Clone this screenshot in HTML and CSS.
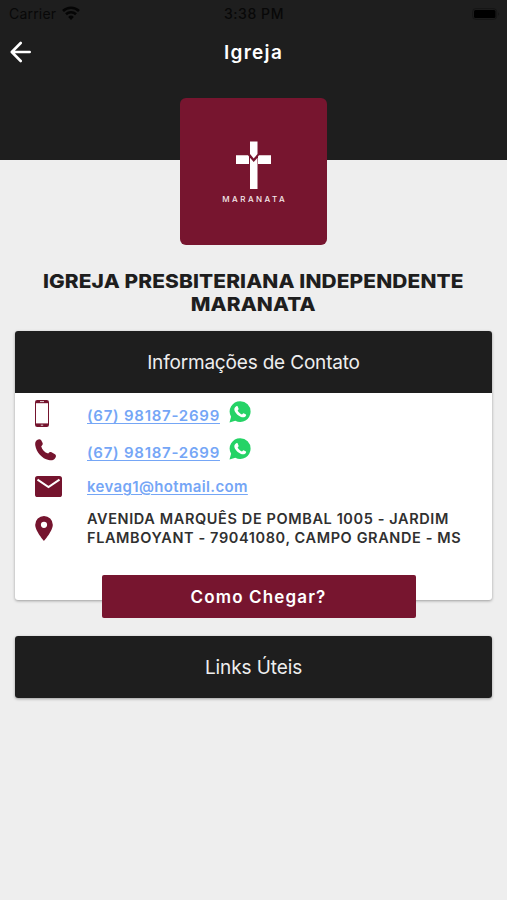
FILE: index.html
```html
<!DOCTYPE html>
<html lang="pt-BR">
<head>
<meta charset="utf-8">
<meta name="viewport" content="width=device-width, initial-scale=1">
<title>Igreja</title>
<link rel="stylesheet" href="styles.css">
</head>
<body>
<svg width="0" height="0" class="defs" aria-hidden="true">
  <symbol id="whatsapp" viewBox="0 0 22 22">
    <path fill="#25d366" d="M11.3 0.2A10.3 10.3 0 0 1 21.6 10.6 10.4 10.4 0 0 1 6.3 19.8L0.5 21.4 2.1 15.8A10.4 10.4 0 0 1 11.3 0.2Z"/>
    <path fill="#fff" d="M7.3 5.2C7.8 4.9 8.4 4.9 8.7 5.5L9.6 7.7C9.8 8.5 8.9 9 8.6 9.6 9.6 11.5 10.9 12.7 12.9 13.5 13.6 13.1 14 12 14.6 12.2L17 13.4C17.5 13.9 16.9 15.1 16.1 15.7 14 17 11.4 15.9 9.1 14.2 6.6 12.2 4.6 9.2 5.6 7 6 6.2 6.6 5.5 7.3 5.2Z"/>
  </symbol>
</svg>
<header class="top">
  <div class="status">
    <span class="carrier">Carrier</span>
    <svg class="wifi" width="18" height="14" viewBox="0 0 18 14"><path fill="none" stroke="#050505" stroke-width="2.6" d="M1 5A11.5 11.5 0 0 1 17 5M4 8.2A7.2 7.2 0 0 1 14 8.2"/><path fill="#050505" d="M9 14L6.2 10.9A4 4 0 0 1 11.8 10.9Z"/></svg>
    <span class="time">3:38 PM</span>
    <svg class="battery" width="29" height="12" viewBox="0 0 29 12"><rect x=".7" y=".7" width="24" height="10.6" rx="3" fill="none" stroke="#151515"/><rect x="2" y="2" width="21.5" height="8" rx="1.5" fill="#000"/><path fill="#121212" d="M26.3 4.2Q28 6 26.3 7.8Z"/></svg>
  </div>
  <div class="nav">
    <svg class="back" width="22" height="22" viewBox="0 0 22 22"><path fill="none" stroke="#fff" stroke-width="2.6" stroke-linecap="round" stroke-linejoin="round" d="M10.7 2L1.8 11 10.7 20M2.2 11H19.7"/></svg>
    <h1 class="title">Igreja</h1>
  </div>
</header>
<main class="page">
  <div class="logo">
    <svg width="35" height="48" viewBox="0 0 35 48"><path fill="#fff" d="M14 .5H21.5V13L17.7 17.5 14 13ZM0 14.2H12L13 15.5V23H0ZM35 14.2H23L22 15.5V23H35ZM14 16.8L17.7 21 21.5 16.8V48H14Z"/></svg>
    <span class="brand">MARANATA</span>
  </div>
  <h2 class="name">IGREJA PRESBITERIANA INDEPENDENTE<br>MARANATA</h2>
  <section class="card">
    <h3 class="bar">Informações de Contato</h3>
    <div class="contacts">
      <div class="row row-mobile">
        <svg class="icon" width="14" height="27" viewBox="0 0 14 27"><rect width="14" height="27" rx="2.2" fill="#75142e"/><rect x="1" y="3.2" width="12" height="20.2" fill="#fff"/><path stroke="#fff" stroke-width=".8" d="M5 1.6H9M5.8 25.2H8.2"/></svg>
        <a class="phone">(67) 98187-2699</a>
        <svg class="wa" width="22" height="22"><use href="#whatsapp"/></svg>
      </div>
      <div class="row row-phone">
        <svg class="icon" width="21" height="22" viewBox="0 0 21 22"><path fill="#75142e" d="M2.1 1C3.7 0 5.3-.1 6.2 1.3L7.5 3.7C8.1 5.1 7.5 6.2 6.2 7.2 7.1 10.8 9.5 13.3 13.2 14.5 14.3 13.1 15.3 12.7 16.5 13.2L20 15.2C21.3 16 21.1 17.5 20.4 18.8 19 21.2 16.8 21.8 13.7 21.1 6.9 19.4 1.4 13.3.3 6.4-.1 4 .4 2.1 2.1 1Z"/></svg>
        <a class="phone">(67) 98187-2699</a>
        <svg class="wa" width="22" height="22"><use href="#whatsapp"/></svg>
      </div>
      <div class="row row-mail">
        <svg class="icon" width="27" height="21" viewBox="0 0 27 21"><rect width="27" height="21" rx="2.6" fill="#75142e"/><path fill="none" stroke="#fff" stroke-width="2" d="M2.5 3.7L13.5 11 24.5 3.7"/></svg>
        <a class="mail">kevag1@hotmail.com</a>
      </div>
      <div class="row row-address">
        <svg class="icon" width="18" height="25" viewBox="0 0 18 25"><path fill="#75142e" fill-rule="evenodd" d="M9 0A8.8 8.8 0 0 1 17.8 8.8C17.8 15 9 25 9 25S.2 15 .2 8.8A8.8 8.8 0 0 1 9 0ZM9 5.7A3.1 3.1 0 1 0 9 11.9 3.1 3.1 0 1 0 9 5.7Z"/></svg>
        <p class="address">AVENIDA MARQUÊS DE POMBAL 1005 - JARDIM<br>FLAMBOYANT - 79041080, CAMPO GRANDE - MS</p>
      </div>
    </div>
  </section>
  <button class="directions">Como Chegar?</button>
  <section class="card links"><h3 class="bar">Links Úteis</h3></section>
</main>
</body>
</html>
```
FILE: styles.css
```css
* { box-sizing: border-box; }
body { margin: 0; min-height: 900px; background: #eee; font-family: Inter, sans-serif; color: #1e1e1e; }
h1, h2, h3, p { margin: 0; }
svg { display: block; flex: none; }
.defs { position: absolute; }
.top { height: 160px; background: #1e1e1e; }
.status { height: 28px; padding: 0 8px 0 9px; display: grid; grid-template-columns: 53px 162px 60px 1fr; align-items: center; color: #080808; font-size: 14px; line-height: 28px; }
.carrier { letter-spacing: .2px; }
.wifi { margin-top: -2px; }
.time { font-weight: 500; white-space: nowrap; letter-spacing: .55px; }
.battery { justify-self: end; margin-right: -2px; margin-top: -1px; }
.nav { height: 48px; display: grid; grid-template-columns: 1fr auto 1fr; align-items: center; padding: 0 10px; }
.title { margin-top: 2px; font-size: 19px; font-weight: 600; line-height: 24px; letter-spacing: 1.3px; color: #fff; }
.page { padding: 0 15px; display: flex; flex-direction: column; align-items: center; }
.logo { width: 147px; height: 147px; margin-top: -62px; border-radius: 6px; background: #77152f; display: flex; flex-direction: column; align-items: center; padding-top: 43px; flex: none; }
.brand { margin-top: 5px; color: #f5e8eb; font-size: 8px; line-height: 10px; font-weight: 500; letter-spacing: 2.5px; margin-right: -2.5px; }
.name { margin-top: 25px; font-size: 19px; line-height: 23px; font-weight: 800; text-align: center; white-space: nowrap; letter-spacing: .1px; transform: scaleX(1.1); }
.card { width: 477px; height: 269px; margin-top: 15px; background: #fff; border-radius: 3px; box-shadow: 0 1px 3px rgba(0,0,0,.35); }
.bar { height: 62px; background: #1e1e1e; border-radius: 3px 3px 0 0; display: flex; align-items: center; justify-content: center; color: #eee; font-size: 19px; font-weight: 400; letter-spacing: -.18px; }
.contacts { padding: 0 19px 0 20px; }
.row { display: grid; grid-template-columns: 52px auto 1fr; align-items: start; }
.row-mobile { height: 45px; padding-top: 7px; }
.row-phone { height: 37px; }
.row-mail { height: 40px; padding-top: 1px; }
.phone, .mail { color: #75a6f6; font-size: 15px; font-weight: 600; line-height: 20px; letter-spacing: .75px; text-decoration: underline; text-decoration-thickness: 1px; text-underline-offset: 2px; white-space: nowrap; }
.phone { margin-top: 5px; }
.row-mobile .phone { margin-top: 6px; }
.mail { letter-spacing: .35px; margin-top: 1px; }
.wa { margin-left: 9.5px; margin-top: 1px; }
.row-phone .icon { margin-top: 1px; }
.row-phone .wa { margin-top: 0; }
.row-address .icon { margin-top: 1px; }
.address { margin-top: -6px; color: #303030; font-size: 14.5px; line-height: 19px; font-weight: 600; letter-spacing: .61px; white-space: nowrap; }
.directions { width: 314px; height: 43px; margin: -25px 0 0 10px; border: 0; border-radius: 2px; background: #77152f; color: #fff; font: 600 17px Inter, sans-serif; letter-spacing: 1.15px; position: relative; }
.links { height: 62px; margin-top: 18px; }
.links .bar { border-radius: 3px; letter-spacing: -.1px; }
```
